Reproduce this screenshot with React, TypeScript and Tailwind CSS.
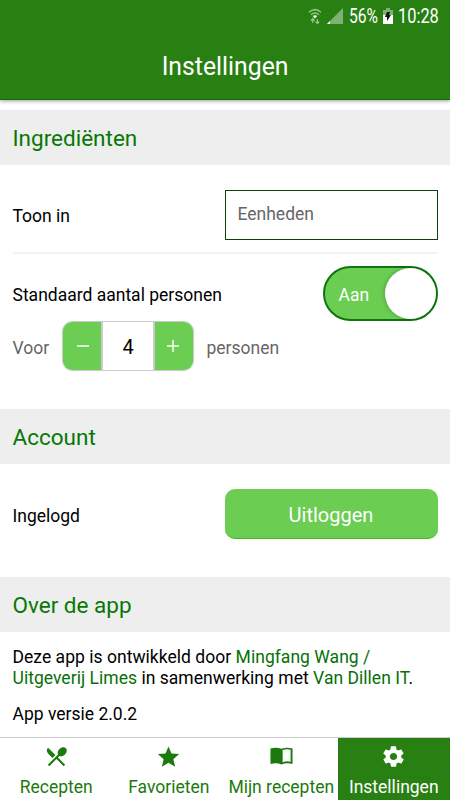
import { ReactNode, useState } from 'react'
import { IoMdSettings, IoMdStar } from 'react-icons/io'
import { MdRestaurantMenu } from 'react-icons/md'

function BookIcon() {
  return (
    <svg width="23" height="18" viewBox="0 0 24 19" preserveAspectRatio="none" fill="currentColor">
      <path d="M.5 1.5Q6.5-.2 12 1.8Q17.5-.2 23.5 1.5V18Q17.5 16.2 12 18.4Q6.5 16.2.5 18ZM13.2 3.2V16Q17.5 14.4 21.5 15.5V2.9Q17.5 1.6 13.2 3.2Z" fillRule="evenodd" />
    </svg>
  )
}

const tabs = [
  { name: 'Recepten', icon: <MdRestaurantMenu size={25} /> },
  { name: 'Favorieten', icon: <IoMdStar size={27} /> },
  { name: 'Mijn recepten', icon: <BookIcon /> },
  { name: 'Instellingen', icon: <IoMdSettings size={25} /> },
]

function StatusBar() {
  return (
    <div className="flex h-8 items-center justify-end pr-[11px] text-white">
      <svg width="16" height="18" viewBox="0 0 16 18" fill="none" className="mr-[4px]">
        <path d="M2 5.2Q8 0 14 5.2M4 7.7Q8 4.3 12 7.7" stroke="#94c388" strokeWidth="1.5" />
        <path d="M5.8 9.1Q8 7.2 10.2 9.1L8 11.5Z" fill="#fff" />
        <path d="M5.8 16v-4M10.4 12v4M4 13.5l1.8-2 1.8 2M8.6 14.5l1.8 2 1.8-2" stroke="#94c388" strokeWidth="1.2" />
      </svg>
      <svg width="16" height="16" viewBox="0 0 16 16" className="mr-[6px]">
        <path d="M16 0v16H0z" fill="#7fb172" />
        <path d="M3 13v3H0z" fill="#fff" />
      </svg>
      <span className="w-[30px] pt-px text-[19.5px] leading-none"><span className="inline-block origin-left scale-x-[0.8]">56%</span></span>
      <svg width="10" height="16" viewBox="0 0 10 16" className="mr-[5px] ml-[4px]">
        <path d="M3 0h4v2h3v5H0V2h3z" fill="#7fb172" />
        <path d="M0 7h10v9H0z" fill="#fff" />
        <path d="M4 4h3L6 7h2l-4 6V9H2z" fill="#111" />
      </svg>
      <span className="w-[41px] text-[20px] leading-none"><span className="inline-block origin-left scale-x-[0.82]">10:28</span></span>
    </div>
  )
}

function SectionTitle({ children }: { children: ReactNode }) {
  return (
    <h2 className="flex h-[55px] items-center bg-[#eee] px-[12.5px] pt-[2px] text-[22.5px] text-[#077807]">{children}</h2>
  )
}

export default function App() {
  const [persons, setPersons] = useState(4)
  const [enabled, setEnabled] = useState(true)
  const [active, setActive] = useState('Instellingen')

  return (
    <div className="flex h-[800px] w-[450px] flex-col overflow-hidden bg-white font-['Roboto',sans-serif] text-[17.5px] text-black">
      <header className="z-10 h-[100px] shrink-0 border-b border-[#12690a] bg-[#288012] shadow-[0_1px_4px_rgba(0,0,0,0.4)]">
        <StatusBar />
        <h1 className="pt-[17px] text-center text-[25px] leading-[36px] text-white"><span className="inline-block origin-center scale-x-[0.99]">Instellingen</span></h1>
      </header>

      <main className="min-h-0 flex-1 pt-[10px]">
        <SectionTitle>Ingrediënten</SectionTitle>
        <div className="mx-[12.5px] flex h-[89px] items-center justify-between border-b-2 border-[#f3f3f3] pt-[13px] pb-[1px]">
          <span className="pt-[4px]">Toon in</span>
          <div className="mt-[1px] flex h-[50px] w-[213px] items-center border border-[#07450a] px-[12px] pb-[1px] text-[#666]">Eenheden</div>
        </div>
        <div className="mx-[12.5px] flex h-[67px] items-end justify-between">
          <span className="pb-[13px]">Standaard aantal personen</span>
          <button
            className="flex h-[55px] w-[115px] items-center justify-between rounded-full border-[2px] border-[#0d760d] bg-[#6bcd52] pl-[14px] text-white"
            onClick={() => setEnabled(!enabled)}
          >
            <span className="pt-[3px]">{enabled ? 'Aan' : 'Uit'}</span>
            <span className="size-[51px] rounded-full bg-white shadow-[-1px_0_4px_rgba(0,0,0,0.2)]" />
          </button>
        </div>
        <div className="flex h-[50px] items-center px-[12.5px] text-[#666]">
          <span className="w-[49.5px] pt-[4px]">Voor</span>
          <div className="flex h-[50px] w-[132px] overflow-hidden rounded-[10px] border border-[#ccc] text-white">
            <button className="flex w-[38px] items-center justify-center bg-[#6bcd52]" onClick={() => setPersons(persons - 1)}>
              <svg width="14" height="14" viewBox="0 0 14 14" stroke="#fff" strokeWidth="1.5" className="ml-[2px]"><path d="M1 7h12" /></svg>
            </button>
            <span className="flex flex-1 items-center justify-center border-x-2 border-[#ccc] bg-white pt-[2px] text-[20px] text-black">{persons}</span>
            <button className="flex w-[38px] items-center justify-center bg-[#6bcd52]" onClick={() => setPersons(persons + 1)}>
              <svg width="14" height="14" viewBox="0 0 14 14" stroke="#fff" strokeWidth="1.5" className="mr-[3px]"><path d="M1 7h12M7 1v12" /></svg>
            </button>
          </div>
          <span className="ml-[12.5px] pt-[4px]">personen</span>
        </div>

        <div className="h-[38px]" />
        <SectionTitle>Account</SectionTitle>
        <div className="flex h-[113px] items-start justify-between px-[12.5px] pt-[25px]">
          <span className="pt-[14px]">Ingelogd</span>
          <button className="h-[50px] w-[213px] rounded-[10px] border-b border-[#43bd18] bg-[#6bcd52] pt-[2px] text-[20px] text-white">Uitloggen</button>
        </div>

        <SectionTitle>Over de app</SectionTitle>
        <div className="px-[12.5px] pt-[15px] leading-[21px]">
          <p className="tracking-[0.03px]">
            Deze app is ontwikkeld door <a className="text-[#077007]">Mingfang Wang /<br />Uitgeverij Limes</a> in samenwerking met <a className="text-[#077007]">Van Dillen IT</a>.
          </p>
          <p className="mt-[15px]">App versie 2.0.2</p>
        </div>
      </main>

      <nav className="grid h-[63px] shrink-0 grid-cols-4 border-t border-[#ccc] bg-white">
        {tabs.map((tab) => (
          <button
            key={tab.name}
            onClick={() => setActive(tab.name)}
            className={`flex flex-col items-center whitespace-nowrap ${active === tab.name ? 'bg-[#288012] text-white' : 'text-[#1b790d]'}`}
          >
            <span className="flex h-[37px] items-center justify-center pb-px">{tab.icon}</span>
            <span className="leading-[24px]">{tab.name}</span>
          </button>
        ))}
      </nav>
    </div>
  )
}
